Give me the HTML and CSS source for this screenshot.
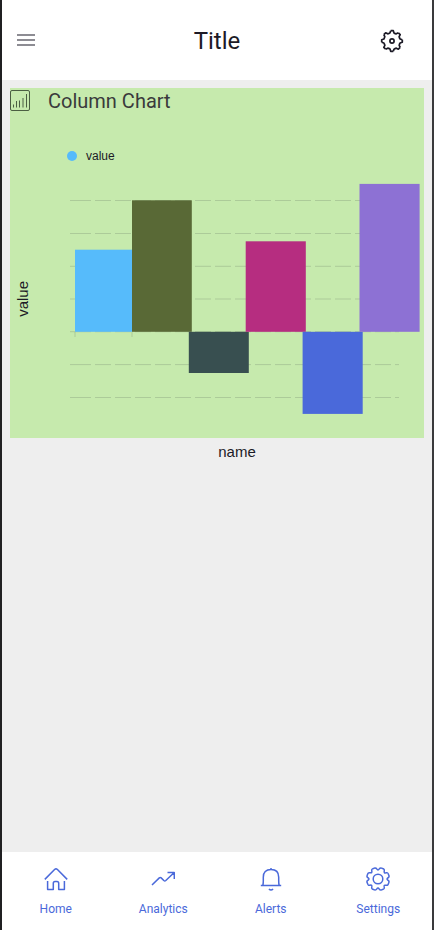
FILE: index.html
```html
<!DOCTYPE html>
<html lang="en">
<head>
<meta charset="utf-8">
<meta name="viewport" content="width=device-width, initial-scale=1">
<title>Title</title>
<link rel="stylesheet" href="styles.css">
</head>
<body>
<header class="topbar">
  <button class="icon-button" type="button" aria-label="Menu">
    <svg width="18" height="12" viewBox="0 0 18 12"><path class="menu-lines" d="M0 1H18M0 6H18M0 11H18"/></svg>
  </button>
  <h1 class="topbar-title">Title</h1>
  <button class="icon-button icon-button-end" type="button" aria-label="Options">
    <svg class="line-icon line-icon-bold" width="24" height="24" viewBox="-12 -12 24 24">
      <defs><path id="cog" d="M-1.3-10.3H1.3L2-8.1Q3.2-7.4 4.3-7.2L6.4-8.2"/></defs>
      <use href="#cog"/><use href="#cog" transform="rotate(45)"/><use href="#cog" transform="rotate(90)"/><use href="#cog" transform="rotate(135)"/><use href="#cog" transform="rotate(180)"/><use href="#cog" transform="rotate(225)"/><use href="#cog" transform="rotate(270)"/><use href="#cog" transform="rotate(315)"/>
      <circle r="2.1"/>
    </svg>
  </button>
</header>

<main class="content">
  <section class="chart-card">
    <div class="chart-head">
      <svg class="chart-icon" width="20" height="22" viewBox="0 0 20 22">
        <rect x=".5" y=".5" width="19" height="20" rx="1.5"/>
        <path d="M3.5 17.5V14.5M6.5 17.5V11M9.5 17.5V10.5M13 17.5V8M16.5 17.5V4"/>
      </svg>
      <h2 class="chart-title">Column Chart</h2>
    </div>
    <div class="legend"><span class="legend-dot"></span>value</div>
    <div class="chart-body">
      <div class="axis-y"><span class="axis-y-label">value</span></div>
      <svg class="plot" viewBox="0 0 354 264" role="img" aria-label="value by name">
        <g class="grid">
          <path d="M0 26.5H5M0 59.5H5M0 92.3H5M0 125H5M0 157.7H5M0 190.6H5M0 223.5H5"/>
          <path class="grid-dash" d="M5 26.5H329M5 59.5H329M5 92.3H329M5 125H329M5 157.7H329M5 190.6H329M5 223.5H329"/>
          <path d="M5 158V163M62 158V163"/>
        </g>
        <rect x="5" y="75.7" width="57" height="82.1" fill="#56bbfb"/>
        <rect x="62" y="26.3" width="59.8" height="131.5" fill="#596936"/>
        <rect x="118.8" y="157.8" width="60" height="41.2" fill="#384f50"/>
        <rect x="175.7" y="67.3" width="60.1" height="90.5" fill="#b62d80"/>
        <rect x="232.6" y="157.8" width="60.1" height="82.1" fill="#4a69da"/>
        <rect x="289.5" y="9.9" width="60.1" height="147.9" fill="#8d71d4"/>
      </svg>
    </div>
  </section>
  <p class="axis-x-label">name</p>
</main>

<nav class="tabbar">
  <a class="tab" href="#home">
    <svg class="line-icon" width="24" height="24" viewBox="0 0 24 24"><path d="M.8 12.4 10.8 2.3Q12 1.3 13.2 2.3L23.2 12.4M3.6 14V22.4H9.3V16.3Q9.3 14.4 11 14.4H13Q14.7 14.4 14.7 16.3V22.4H20.4V14"/></svg>
    Home
  </a>
  <a class="tab" href="#analytics">
    <svg class="line-icon" width="24" height="24" viewBox="0 0 24 24"><path d="M1 18 8.3 10.9Q9.3 10 10.2 10.9L12.8 13.5Q13.8 14.3 14.8 13.5L22.7 6M16.5 5.6H23.3V12"/></svg>
    Analytics
  </a>
  <a class="tab" href="#alerts">
    <svg class="line-icon" width="24" height="24" viewBox="0 0 24 24"><path d="M1.8 18.6H22.2M3.8 18.4Q4.3 17 4.3 14V10.2Q4.3 2.6 12 2.6T19.7 10.2V14Q19.7 17 20.2 18.4M12 1V2.5M9.9 22Q12 24 14.1 22"/></svg>
    Alerts
  </a>
  <a class="tab" href="#settings">
    <svg class="line-icon" width="24" height="24" viewBox="-12 -12 24 24">
      <defs><path id="gear" d="M-1.5-11.4H1.5Q2.6-11 2.7-9.8Q3.1-7.4 5-8.8Q5.9-9.6 7-9.1"/></defs>
      <g transform="rotate(22.5)"><use href="#gear"/><use href="#gear" transform="rotate(45)"/><use href="#gear" transform="rotate(90)"/><use href="#gear" transform="rotate(135)"/><use href="#gear" transform="rotate(180)"/><use href="#gear" transform="rotate(225)"/><use href="#gear" transform="rotate(270)"/><use href="#gear" transform="rotate(315)"/></g>
      <circle r="4.8"/>
    </svg>
    Settings
  </a>
</nav>
</body>
</html>
```
FILE: styles.css
```css
* {
  box-sizing: border-box;
}

body {
  margin: 0;
  min-height: 100vh;
  display: flex;
  flex-direction: column;
  border-left: 2px solid #202022;
  border-right: 2px solid #3a3a3c;
  background: #eee;
  color: #1c1a26;
  font-family: Roboto, "Liberation Sans", sans-serif;
}

svg {
  display: block;
}

.topbar {
  display: grid;
  grid-template-columns: 80px 1fr 80px;
  align-items: center;
  height: 80px;
  background: #fff;
}

.topbar-title {
  margin: 0;
  padding-top: 2px;
  font-size: 24px;
  font-weight: 400;
  line-height: 32px;
  text-align: center;
}

.icon-button {
  justify-self: start;
  display: flex;
  align-items: center;
  height: 48px;
  padding: 0 15px;
  border: 0;
  background: none;
  color: #1c1a26;
}

.icon-button-end {
  justify-self: end;
  padding: 2px 28px 0;
}

.menu-lines {
  stroke: #8d8c93;
  stroke-width: 2;
}

.line-icon {
  fill: none;
  stroke: currentColor;
  stroke-width: 1.5;
  stroke-linejoin: round;
}

.line-icon-bold {
  stroke-width: 1.7;
}

.content {
  flex: 1;
  padding: 8px;
}

.chart-card {
  background: #c6eaad;
}

.chart-head {
  display: flex;
  align-items: center;
  gap: 18px;
  height: 26px;
}

.chart-icon {
  fill: none;
  stroke: #4b5f42;
}

.chart-title {
  margin: 0;
  color: #3a3a3c;
  font-size: 20px;
  font-weight: 400;
  line-height: 26px;
}

.legend {
  display: flex;
  align-items: center;
  gap: 9px;
  padding: 34px 0 10px 57px;
  font: 12px/16px "Liberation Sans", sans-serif;
}

.legend-dot {
  width: 10px;
  height: 10px;
  border-radius: 50%;
  background: #56bbfb;
}

.chart-body {
  display: grid;
  grid-template-columns: 60px 1fr;
}

.axis-y {
  display: flex;
  align-items: center;
  padding: 0 0 14px 4px;
}

.axis-y-label {
  writing-mode: vertical-rl;
  transform: rotate(180deg);
  font: 15px/18px "Liberation Sans", sans-serif;
}

.plot {
  width: 100%;
}

.grid {
  fill: none;
  stroke: #1c1a26;
  stroke-opacity: 0.15;
}

.grid-dash {
  stroke-dasharray: 16 4;
}

.axis-x-label {
  margin: 5px 0 0 40px;
  font: 15px/18px "Liberation Sans", sans-serif;
  text-align: center;
}

.tabbar {
  display: grid;
  grid-template-columns: repeat(4, 1fr);
  height: 78px;
  background: #fff;
}

.tab {
  display: flex;
  flex-direction: column;
  align-items: center;
  gap: 10px;
  padding-top: 15px;
  color: #4a69da;
  font-size: 12px;
  line-height: 16px;
  text-decoration: none;
}
```
